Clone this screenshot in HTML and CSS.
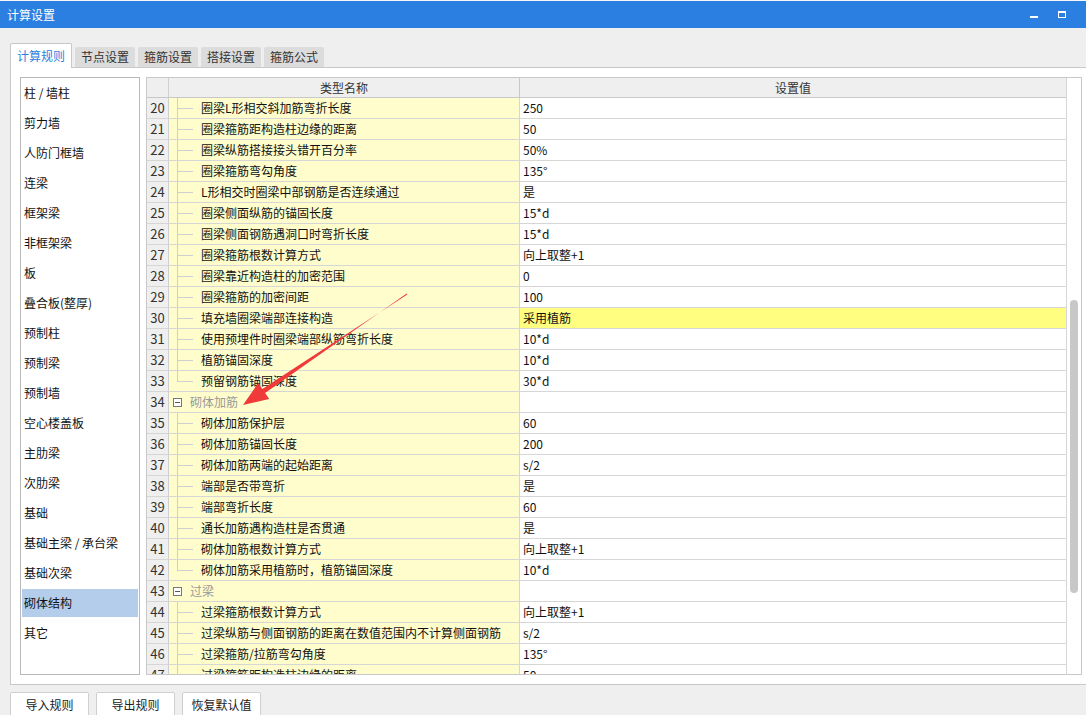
FILE: index.html
```html
<!DOCTYPE html>
<html lang="zh">
<head>
<meta charset="utf-8">
<title>计算设置</title>
<link rel="stylesheet" href="styles.css">
</head>
<body>
<div class="topstrip"></div>
<div class="titlebar">
  <span class="title">计算设置</span>
  <div class="winctl"><span class="wmin"></span><span class="wmax"></span></div>
</div>
<div class="tabs">
  <div class="tab active">计算规则</div>
  <div class="tab">节点设置</div>
  <div class="tab">箍筋设置</div>
  <div class="tab">搭接设置</div>
  <div class="tab">箍筋公式</div>
</div>
<div class="panel">
  <ul class="side">
    <li>柱 / 墙柱</li>
    <li>剪力墙</li>
    <li>人防门框墙</li>
    <li>连梁</li>
    <li>框架梁</li>
    <li>非框架梁</li>
    <li>板</li>
    <li>叠合板(整厚)</li>
    <li>预制柱</li>
    <li>预制梁</li>
    <li>预制墙</li>
    <li>空心楼盖板</li>
    <li>主肋梁</li>
    <li>次肋梁</li>
    <li>基础</li>
    <li>基础主梁 / 承台梁</li>
    <li>基础次梁</li>
    <li class="sel">砌体结构</li>
    <li>其它</li>
  </ul>
  <div class="grid">
    <div class="gtable">
      <div class="row head"><div class="c num"></div><div class="c name">类型名称</div><div class="c val">设置值</div></div>
      <div class="row"><div class="c num">20</div><div class="c name ch">圈梁L形相交斜加筋弯折长度</div><div class="c val">250</div></div>
      <div class="row"><div class="c num">21</div><div class="c name ch">圈梁箍筋距构造柱边缘的距离</div><div class="c val">50</div></div>
      <div class="row"><div class="c num">22</div><div class="c name ch">圈梁纵筋搭接接头错开百分率</div><div class="c val">50%</div></div>
      <div class="row"><div class="c num">23</div><div class="c name ch">圈梁箍筋弯勾角度</div><div class="c val">135°</div></div>
      <div class="row"><div class="c num">24</div><div class="c name ch">L形相交时圈梁中部钢筋是否连续通过</div><div class="c val">是</div></div>
      <div class="row"><div class="c num">25</div><div class="c name ch">圈梁侧面纵筋的锚固长度</div><div class="c val">15*d</div></div>
      <div class="row"><div class="c num">26</div><div class="c name ch">圈梁侧面钢筋遇洞口时弯折长度</div><div class="c val">15*d</div></div>
      <div class="row"><div class="c num">27</div><div class="c name ch">圈梁箍筋根数计算方式</div><div class="c val">向上取整+1</div></div>
      <div class="row"><div class="c num">28</div><div class="c name ch">圈梁靠近构造柱的加密范围</div><div class="c val">0</div></div>
      <div class="row"><div class="c num">29</div><div class="c name ch">圈梁箍筋的加密间距</div><div class="c val">100</div></div>
      <div class="row"><div class="c num">30</div><div class="c name ch">填充墙圈梁端部连接构造</div><div class="c val hl">采用植筋</div></div>
      <div class="row"><div class="c num">31</div><div class="c name ch">使用预埋件时圈梁端部纵筋弯折长度</div><div class="c val">10*d</div></div>
      <div class="row"><div class="c num">32</div><div class="c name ch">植筋锚固深度</div><div class="c val">10*d</div></div>
      <div class="row"><div class="c num">33</div><div class="c name ch last">预留钢筋锚固深度</div><div class="c val">30*d</div></div>
      <div class="row"><div class="c num">34</div><div class="c name grp"><span class="box"></span>砌体加筋</div><div class="c val"></div></div>
      <div class="row"><div class="c num">35</div><div class="c name ch">砌体加筋保护层</div><div class="c val">60</div></div>
      <div class="row"><div class="c num">36</div><div class="c name ch">砌体加筋锚固长度</div><div class="c val">200</div></div>
      <div class="row"><div class="c num">37</div><div class="c name ch">砌体加筋两端的起始距离</div><div class="c val">s/2</div></div>
      <div class="row"><div class="c num">38</div><div class="c name ch">端部是否带弯折</div><div class="c val">是</div></div>
      <div class="row"><div class="c num">39</div><div class="c name ch">端部弯折长度</div><div class="c val">60</div></div>
      <div class="row"><div class="c num">40</div><div class="c name ch">通长加筋遇构造柱是否贯通</div><div class="c val">是</div></div>
      <div class="row"><div class="c num">41</div><div class="c name ch">砌体加筋根数计算方式</div><div class="c val">向上取整+1</div></div>
      <div class="row"><div class="c num">42</div><div class="c name ch last">砌体加筋采用植筋时，植筋锚固深度</div><div class="c val">10*d</div></div>
      <div class="row"><div class="c num">43</div><div class="c name grp"><span class="box"></span>过梁</div><div class="c val"></div></div>
      <div class="row"><div class="c num">44</div><div class="c name ch">过梁箍筋根数计算方式</div><div class="c val">向上取整+1</div></div>
      <div class="row"><div class="c num">45</div><div class="c name ch">过梁纵筋与侧面钢筋的距离在数值范围内不计算侧面钢筋</div><div class="c val">s/2</div></div>
      <div class="row"><div class="c num">46</div><div class="c name ch">过梁箍筋/拉筋弯勾角度</div><div class="c val">135°</div></div>
      <div class="row"><div class="c num">47</div><div class="c name ch">过梁箍筋距构造柱边缘的距离</div><div class="c val">50</div></div>
    </div>
    <div class="vscroll"><div class="thumb"></div></div>
  </div>
</div>
<div class="buttons">
  <button class="btn">导入规则</button>
  <button class="btn">导出规则</button>
  <button class="btn">恢复默认值</button>
</div>
<svg class="arrow" width="1086" height="715" viewBox="0 0 1086 715">
  <polygon points="407.3,294.4 262.3,388.9 258.2,383.0 243,405 269.2,399.0 265.1,393.1 406.7,293.6" fill="#f03a3a"/>
</svg>
</body>
</html>
```

FILE: styles.css
```css
* { box-sizing: border-box; }
html, body { margin: 0; padding: 0; }
body {
  width: 1086px;
  height: 715px;
  overflow: hidden;
  background: #efefef;
  font-family: "Noto Sans CJK SC", "Microsoft YaHei", sans-serif;
  font-size: 12px;
  color: #222;
  position: relative;
}
.topstrip { height: 1px; background: #f6f6f6; }
.titlebar {
  height: 27px;
  background: #2b7fe0;
  color: #fff;
  display: flex;
  align-items: center;
  padding-left: 7px;
}
.title { font-size: 12px; line-height: 27px; }
.winctl {
  margin-left: auto;
  display: flex;
  align-items: flex-start;
  height: 27px;
  padding-right: 20px;
}
.wmin {
  width: 8px; height: 2px; background: #fff;
  margin-top: 15px; margin-right: 20px;
}
.wmax {
  width: 8px; height: 7px;
  border: 1px solid #fff; border-top-width: 2px;
  margin-top: 10px;
}
.tabs {
  height: 39px;
  padding-left: 10px;
  display: flex;
  align-items: flex-end;
  gap: 3px;
}
.tab {
  width: 60px;
  height: 20px;
  line-height: 20px;
  text-align: center;
  background: #dcdcdc;
  color: #333;
  border-radius: 2px 2px 0 0;
}
.tab.active {
  width: 62px;
  height: 25px;
  line-height: 23px;
  background: #fff;
  border: 1px solid #c8c8c8;
  border-bottom: none;
  color: #2b7fe0;
  margin-bottom: -1px;
  position: relative;
  z-index: 1;
}
.panel {
  margin-left: 10px;
  height: 618px;
  background: #fff;
  border: 1px solid #c8c8c8;
  border-right: none;
  padding: 9px 0 9px 9px;
  display: flex;
  gap: 6px;
}
.side {
  list-style: none;
  margin: 0;
  padding: 1px;
  width: 120px;
  height: 598px;
  border: 1px solid #b8b8b8;
  flex: none;
}
.side li {
  height: 28px;
  line-height: 28px;
  margin-bottom: 2px;
  padding-left: 2px;
  color: #111;
  white-space: nowrap;
}
.side li.sel { background: #b3cdea; }
.grid {
  width: 936px;
  height: 598px;
  border: 1px solid #c8c8c8;
  display: flex;
  flex: none;
}
.gtable { flex: 1; overflow: hidden; }
.row {
  display: grid;
  grid-template-columns: 22px 351px 1fr;
  height: 21px;
  border-bottom: 1px solid #d6d6d6;
}
.row.head { height: 20px; border-bottom-color: #c8c8c8; }
.c {
  line-height: 20px;
  white-space: nowrap;
  overflow: hidden;
}
.num {
  background: #efefef;
  border-right: 1px solid #cfcfcf;
  text-align: center;
  color: #333;
  font-size: 13px;
}
.name {
  background: #fffdcc;
  border-right: 1px solid #d6d6d6;
  color: #111;
}
.val { padding-left: 3px; color: #111; }
.head .c { background: #efefef; text-align: center; color: #333; padding-left: 0; }
.head .name { border-right-color: #c8c8c8; }
.name.ch {
  padding-left: 32px;
  background:
    linear-gradient(#cfcfcf, #cfcfcf) 8px 0 / 1px 100% no-repeat,
    linear-gradient(#cfcfcf, #cfcfcf) 8px 10px / 16px 1px no-repeat,
    #fffdcc;
}
.name.ch.last {
  background:
    linear-gradient(#cfcfcf, #cfcfcf) 8px 0 / 1px 10px no-repeat,
    linear-gradient(#cfcfcf, #cfcfcf) 8px 10px / 16px 1px no-repeat,
    #fffdcc;
}
.name.grp {
  display: flex;
  align-items: center;
  padding-left: 4px;
  color: #999;
}
.box {
  width: 9px; height: 9px;
  border: 1px solid #777;
  margin-right: 8px;
  background: linear-gradient(#555, #555) center / 5px 1px no-repeat, #fff;
  flex: none;
}
.val.hl { background: #fffe80; }
.vscroll {
  width: 15px;
  border-left: 1px solid #d6d6d6;
  flex: none;
  padding-left: 3px;
}
.thumb {
  width: 8px;
  height: 293px;
  margin-top: 222px;
  background: #c8c8c8;
  border-radius: 4px;
}
.buttons {
  display: flex;
  gap: 7px;
  padding-left: 10px;
  margin-top: 7px;
}
.btn {
  width: 79px;
  height: 26px;
  background: #fff;
  border: 1px solid #cfcfcf;
  border-radius: 2px;
  font-family: "Noto Sans CJK SC", sans-serif;
  font-size: 12px;
  color: #222;
  padding: 0;
  line-height: 24px;
}
.arrow {
  position: absolute;
  left: 0; top: 0;
  pointer-events: none;
}
```
